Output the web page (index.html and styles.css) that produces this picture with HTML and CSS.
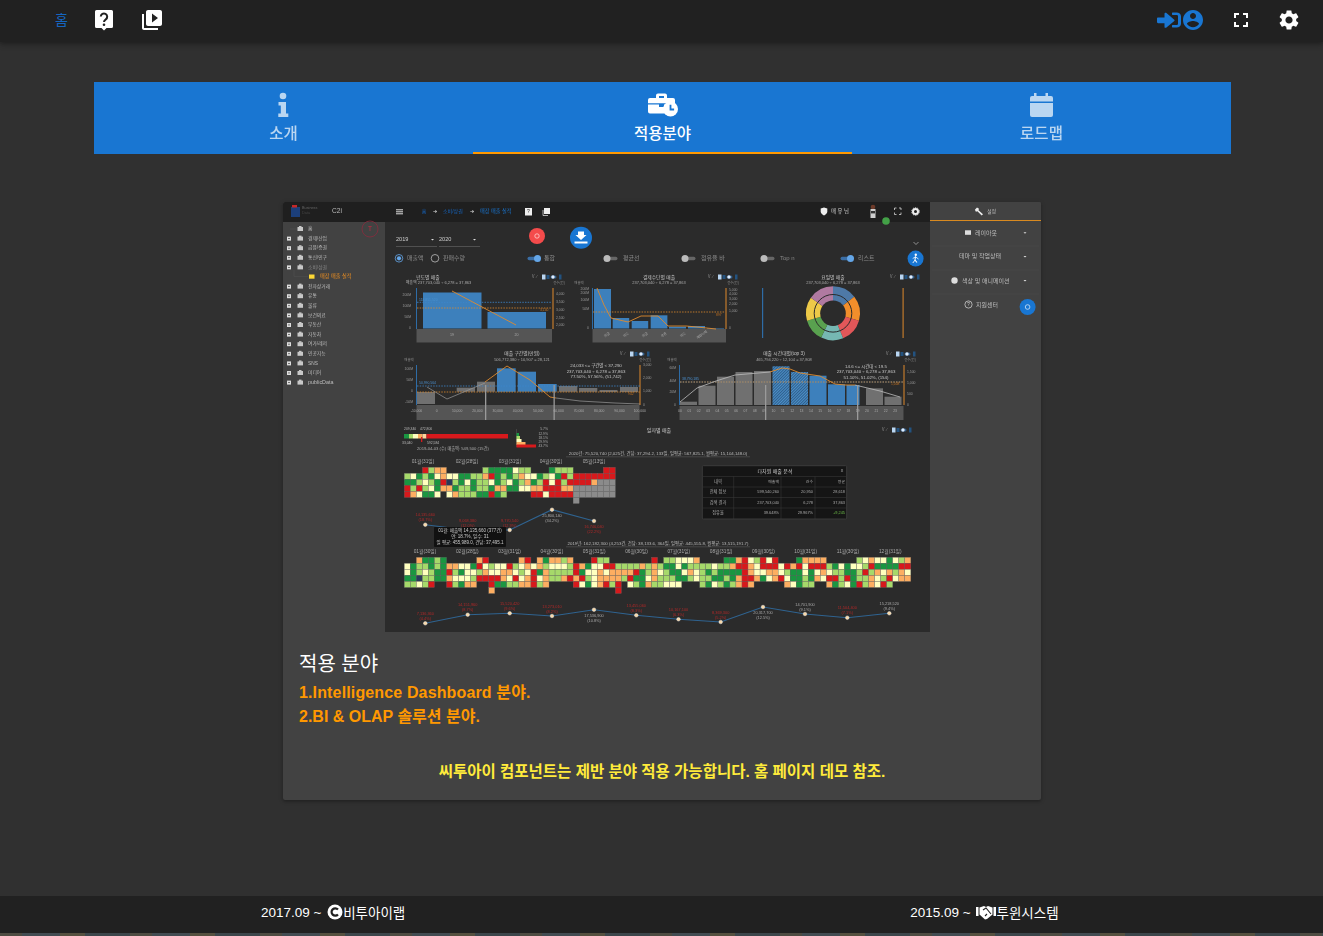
FILE: index.html
```html
<!DOCTYPE html>
<html lang="ko">
<head>
<meta charset="utf-8">
<title>적용분야</title>
<link rel="stylesheet" href="styles.css">
</head>
<body>
<header class="topbar">
  <nav class="topbar-left">
    <a class="top-home">홈</a>
    <span class="top-btn">
      <svg class="ico-help" viewBox="0 0 20 22"><path class="white" d="M2.5 1h15A1.5 1.500 0 0 1 19 2.500v15a1.500 1.500 0 0 1-1.500 1.500H12.500L10 21.500 7.500 19h-5A1.500 1.500 0 0 1 1 17.500v-15A1.500 1.500 0 0 1 2.500 1z"/><path class="qmark" d="M6.800 7.600a3.200 3.200 0 1 1 5 2.700c-1.200.8-1.800 1.300-1.800 2.700"/><circle class="qdot" cx="10" cy="15.700" r="1.300"/></svg>
    </span>
    <span class="top-btn">
      <svg class="ico-24" viewBox="0 0 24 24"><path class="white" d="M4 6H2v14c0 1.100.9 2 2 2h14v-2H4V6zm16-4H8c-1.100 0-2 .9-2 2v12c0 1.100.9 2 2 2h12c1.100 0 2-.9 2-2V4c0-1.100-.9-2-2-2zm-8 12.500v-9l6 4.500-6 4.500z"/></svg>
    </span>
  </nav>
  <div class="topbar-right">
    <span class="login-group">
      <svg class="ico-login" viewBox="0 0 512 512" preserveAspectRatio="none"><path class="blue" d="M416 448h-84c-6.600 0-12-5.400-12-12v-40c0-6.600 5.400-12 12-12h84c17.700 0 32-14.300 32-32V160c0-17.700-14.300-32-32-32h-84c-6.600 0-12-5.400-12-12V76c0-6.600 5.400-12 12-12h84c53 0 96 43 96 96v192c0 53-43 96-96 96zm-47-201L201 79c-15-15-41-4.500-41 17v96H24c-13.300 0-24 10.700-24 24v96c0 13.300 10.700 24 24 24h136v96c0 21.500 26 32 41 17l168-168c9.300-9.400 9.300-24.600 0-34z"/></svg>
      <svg class="ico-24" viewBox="0 0 24 24"><path class="blue" d="M12 2C6.480 2 2 6.480 2 12s4.480 10 10 10 10-4.480 10-10S17.520 2 12 2zm0 3c1.660 0 3 1.340 3 3s-1.340 3-3 3-3-1.340-3-3 1.340-3 3-3zm0 14.200c-2.500 0-4.710-1.280-6-3.220.03-1.990 4-3.080 6-3.080 1.990 0 5.970 1.090 6 3.080-1.290 1.940-3.500 3.220-6 3.220z"/></svg>
    </span>
    <svg class="ico-24 full" viewBox="0 0 24 24"><path class="white" d="M7 14H5v5h5v-2H7v-3zm-2-4h2V7h3V5H5v5zm12 7h-3v2h5v-5h-2v3zM14 5v2h3v3h2V5h-5z"/></svg>
    <svg class="ico-24 gear" viewBox="0 0 24 24"><path class="white" d="M19.140 12.940c.04-.3.06-.61.06-.94 0-.32-.02-.64-.07-.94l2.030-1.580c.18-.14.23-.41.12-.61l-1.920-3.320c-.12-.22-.37-.29-.59-.22l-2.390.96c-.5-.38-1.030-.7-1.620-.94l-.36-2.540c-.04-.24-.24-.41-.48-.41h-3.840c-.24 0-.43.17-.47.41l-.36 2.540c-.59.24-1.130.57-1.620.94l-2.390-.96c-.22-.08-.47 0-.59.22L2.740 8.870c-.12.21-.08.47.12.61l2.030 1.580c-.05.3-.09.63-.09.94s.02.64.07.94l-2.030 1.580c-.18.14-.23.41-.12.61l1.920 3.320c.12.22.37.29.59.22l2.390-.96c.5.38 1.030.7 1.620.94l.36 2.540c.05.24.24.41.48.41h3.840c.24 0 .44-.17.47-.41l.36-2.540c.59-.24 1.130-.56 1.620-.94l2.390.96c.22.08.47 0 .59-.22l1.920-3.320c.12-.22.07-.47-.12-.61l-2.010-1.580zM12 15.600c-1.980 0-3.600-1.620-3.600-3.600s1.620-3.600 3.600-3.600 3.600 1.620 3.600 3.600-1.620 3.600-3.600 3.600z"/></svg>
  </div>
</header>

<main class="content">
  <div class="tabs">
    <div class="tab">
      <svg class="tab-ico" viewBox="0 0 30 26"><circle class="white" cx="14" cy="4" r="3.300"/><path class="white" d="M9.500 10h7.500v11.500h2.300V25H9.300v-3.500h2.500v-8H9.500z"/></svg>
      <span class="tab-label">소개</span>
    </div>
    <div class="tab active">
      <svg class="tab-ico" viewBox="0 0 30 26"><path class="white" d="M10 1.500h7a2 2 0 0 1 2 2v2.500h6a2 2 0 0 1 2 2v3.200H0V8a2 2 0 0 1 2-2h6V3.500a2 2 0 0 1 2-2zM11 6h5V4h-5z"/><path class="white" d="M0 12.500h11V15h5v-2.500h2v9H2a2 2 0 0 1-2-2z"/><circle class="white" cx="22.500" cy="17" r="7.500"/><path class="clockhand" d="M22.500 12.800v4.700h3.600"/></svg>
      <span class="tab-label">적용분야</span>
    </div>
    <div class="tab">
      <svg class="tab-ico" viewBox="0 0 30 26"><path class="white" d="M7 1h2.500v3h9V1H21v3h3a2 2 0 0 1 2 2v3.500H3V6a2 2 0 0 1 2-2h2z"/><path class="white" d="M3 11h23v12a2 2 0 0 1-2 2H5a2 2 0 0 1-2-2z"/></svg>
      <span class="tab-label">로드맵</span>
    </div>
  </div>

  <article class="card">
    <svg class="mock" id="mock" viewBox="283 202 758 430" width="758" height="430"></svg>
    <div class="card-body">
      <h2 class="card-title">적용 분야</h2>
      <p class="item wide">1.Intelligence Dashboard 분야.</p>
      <p class="item">2.BI &amp; OLAP 솔루션 분야.</p>
      <p class="note">씨투아이 컴포넌트는 제반 분야 적용 가능합니다. 홈 페이지 데모 참조.</p>
    </div>
  </article>
</main>

<footer class="footer">
  <span class="foot-item">2017.09 ~ <svg class="foot-c" viewBox="0 0 16 16"><circle class="white" cx="8" cy="8" r="7.500"/><path class="cmark" d="M11 5.500a3.700 3.700 0 1 0 0 5"/></svg>비투아이랩</span>
  <span class="foot-item">2015.09 ~ <svg class="foot-h" viewBox="0 0 20 16"><path class="white" d="M0 3h2.500v9H0zM17.500 3H20v9h-2.500zM3.500 3.500 8 2l2 1 2-1 4.500 1.500v7L11 15l-2 .5-5.500-5z"/><path class="cmark thin" d="M7 6l3-2 5 6M9 12l2-2"/></svg>투윈시스템</span>
</footer>
<div class="ground"></div>
<script src="app.js"></script>
</body>
</html>
```
FILE: styles.css
```css
* { box-sizing: border-box; }
html, body { margin: 0; height: 100%; }
body {
  display: flex;
  flex-direction: column;
  height: 936px;
  overflow: hidden;
  background: #303030;
  color: #fff;
  font-family: "Liberation Sans", "Noto Sans CJK KR", sans-serif;
  font-size: 14px;
}
.white { fill: #fff; }
.blue { fill: #1976d2; }
.qmark { fill: none; stroke: #212121; stroke-width: 2; }
.qdot { fill: #212121; }
.clockhand { fill: none; stroke: #1976d2; stroke-width: 1.800; }
.cmark { fill: none; stroke: #212121; stroke-width: 2.200; }
.cmark.thin { stroke-width: 1.100; }

.topbar {
  flex: none;
  height: 42px;
  display: flex;
  align-items: center;
  justify-content: space-between;
  background: #212121;
  box-shadow: 0 2px 4px rgba(0, 0, 0, .25), 0 1px 8px rgba(0, 0, 0, .18);
  padding: 0 22px 2px 55px;
}
.topbar-left { display: flex; align-items: center; }
.top-home { color: #1565c0; font-size: 14px; line-height: 20px; width: 24px; }
.top-btn { display: flex; margin-left: 15px; }
.top-btn + .top-btn { margin-left: 26px; }
.ico-help { width: 20px; height: 22px; display: block; }
.ico-24 { width: 24px; height: 24px; display: block; }
.topbar-right { display: flex; align-items: center; }
.login-group { display: flex; align-items: center; }
.ico-login { width: 24px; height: 20px; display: block; }
.full { margin-left: 24px; }
.gear { margin-left: 24px; }

.content { flex: 1; padding: 40px 92px 0 94px; }
.tabs { display: flex; height: 72px; background: #1976d2; }
.tab {
  flex: 1;
  display: flex;
  flex-direction: column;
  align-items: center;
  padding-top: 10px;
  opacity: .7;
}
.tab.active { opacity: 1; border-bottom: 2px solid #ff9800; }
.tab-ico { width: 30px; height: 26px; display: block; }
.tab-label { font-size: 15.500px; font-weight: 500; line-height: 20px; margin-top: 4px; font-family: "Noto Sans CJK KR", sans-serif; }

.card {
  width: 758px;
  height: 598px;
  margin: 48px 0 0 189px;
  background: #424242;
  border-radius: 2px;
  box-shadow: 0 1px 5px rgba(0, 0, 0, .2), 0 2px 2px rgba(0, 0, 0, .14);
  overflow: hidden;
}
.mock { display: block; background: #424242; }
.mock-inner { filter: blur(.65px); }
.card-body { padding: 16px; }
.card-title { margin: 0; font-size: 20px; line-height: 32px; font-weight: 400; }
.item { margin: 0; font-size: 16px; line-height: 24px; font-weight: 700; color: #ff9800; position: relative; top: 1px; }
.item.wide { letter-spacing: .14px; }
.note { margin: 32px 0 0; font-size: 15.500px; line-height: 24px; font-weight: 700; color: #ffeb3b; text-align: center; }

.footer {
  flex: none;
  height: 37px;
  display: flex;
  align-items: center;
  gap: 505px;
  padding: 0 0 5px 261px;
  background: #212121;
  font-size: 13.500px;
}
.foot-item { display: flex; align-items: center; white-space: pre; }
.foot-c { width: 16px; height: 16px; margin-left: 2px; }
.foot-h { width: 20px; height: 16px; margin-left: 2px; }
.ground {
  flex: none;
  height: 3px;
  background: repeating-linear-gradient(90deg, #4e4c42 0 22px, #424c52 22px 60px, #55503f 60px 85px, #3c464b 85px 130px);
}
```
FILE: app.js
```js
var NS = "http://www.w3.org/2000/svg";
var root = document.createElementNS(NS, "g");
root.setAttribute("class", "mock-inner");
document.getElementById("mock").appendChild(root);

function el(tag, attrs, text) {
  var e = document.createElementNS(NS, tag);
  for (var k in attrs) e.setAttribute(k, attrs[k]);
  if (text !== undefined) e.textContent = text;
  root.appendChild(e);
  return e;
}
function R(x, y, w, h, fill, extra) {
  var a = { x: x, y: y, width: w, height: h, fill: fill };
  for (var k in extra || {}) a[k] = extra[k];
  return el("rect", a);
}
function C(x, y, r, fill, extra) {
  var a = { cx: x, cy: y, r: r, fill: fill };
  for (var k in extra || {}) a[k] = extra[k];
  return el("circle", a);
}
function L(pts, color, w, dash) {
  var a = { points: pts, fill: "none", stroke: color, "stroke-width": w || 0.8 };
  if (dash) a["stroke-dasharray"] = dash;
  return el("polyline", a);
}
function T(x, y, s, size, color, anchor) {
  return el("text", {
    x: x, y: y, "font-size": size || 4.4, fill: color || "#bdbdbd",
    "text-anchor": anchor || "start", "dominant-baseline": "middle",
    "font-family": "'Liberation Sans','Noto Sans CJK KR',sans-serif"
  }, s);
}

/* ---- backgrounds ---- */
R(283, 202, 758, 430, "#424242");
R(385, 222, 545, 411, "#2b2b2b");
R(283, 202, 647, 20, "#1f1f1f");

/* ---- mock top bar ---- */
R(291, 207, 9, 10, "#1c3f7a");
R(292, 205, 5, 2.500, "#c62828");
T(302, 207.500, "Business", 3.800, "#666");
T(302, 213, "Data", 3.800, "#444");
T(332, 211.500, "C2i", 6.600, "#bbb");
[209.300, 211.300, 213.300].forEach(function (y) { R(396, y, 7, 1, "#ddd"); });
T(424, 211.500, "홈", 5, "#1565c0", "middle");
T(435, 211.500, "➔", 4.500, "#ddd", "middle");
T(443, 211.500, "소비/상권", 5, "#1565c0");
T(472, 211.500, "➔", 4.500, "#ddd", "middle");
T(480, 211.500, "매장 매출 실적", 5.200, "#1976d2");
R(525, 208, 7, 7.500, "#eee");
T(528.500, 212, "?", 5, "#222", "middle");
R(544, 208, 6, 6, "#eee");
L("543,210 543,215.500 548,215.500", "#eee", 0.7);
el("path", { d: "M824 207.500l3.300 1v3c0 1.800-1.500 3.200-3.300 4-1.800-.8-3.300-2.200-3.300-4v-3z", fill: "#eee" });
T(831, 211.500, "매 유 님", 5.400, "#ccc");
C(873, 207, 2.300, "#6d3b2a");
R(870.500, 209, 5, 9, "#cfcfcf");
R(871, 211, 4, 2.400, "#333");
C(886, 221, 3.800, "#43a047");
L("894.500,210 894.500,208 896.500,208", "#eee", 0.7);
L("899,208 901,208 901,210", "#eee", 0.7);
L("894.500,212.500 894.500,214.500 896.500,214.500", "#eee", 0.7);
L("899,214.500 901,214.500 901,212.500", "#eee", 0.7);
C(915.500, 211.500, 2.500, "none", { stroke: "#eee", "stroke-width": 2 });
C(915.500, 211.500, 3.800, "none", { stroke: "#eee", "stroke-width": 0.9, "stroke-dasharray": "1.400 1" });

/* ---- sidebar ---- */
[["홈", 0], ["경제/산업", 1], ["금융/증권", 1], ["통신/인구", 1], ["소비/상권", 2], ["매장 매출 실적", 3],
 ["전자상거래", 1], ["유통", 1], ["물류", 1], ["보건의료", 1], ["부동산", 1], ["자동차", 1], ["여가/레저", 1],
 ["인공지능", 1], ["SNS", 1], ["미디어", 1], ["publicData", 1]].forEach(function (m, i) {
  var y = 229 + i * 9.600;
  if (m[1] === 3) {
    L("294,270 294,276.500 308,276.500", "#555", 0.4);
    R(309, 274.500, 5.500, 4.200, "#fdd835");
    T(320, y, m[0], 5.200, "#f09020");
    return;
  }
  if (m[1] > 0) {
    R(287, y - 2, 4, 4, "#ddd");
    R(288, y - .4, 2, .7, "#444");
  } else {
    L("290,229 298,229", "#555", 0.4);
  }
  R(297.500, y - 2, 5.500, 4, "#c8c8c8");
  R(299, y - 3, 2.500, 1.500, "#c8c8c8");
  T(308, y, m[0], m[0] === "publicData" ? 5.400 : 4.800, m[1] === 2 ? "#888" : "#bdbdbd");
});
C(370, 229, 8, "none", { stroke: "#8a2b3e", "stroke-width": 0.8 });
T(370, 229.300, "T", 6.500, "#c62840", "middle");

/* ---- controls ---- */
T(396, 239.500, "2019", 5.600, "#ccc");
T(439, 239.500, "2020", 5.600, "#ccc");
L("396,246.500 437,246.500", "#777", 0.5);
L("439,246.500 480,246.500", "#777", 0.5);
el("path", { d: "M431 239l3 0-1.500 1.500z", fill: "#ddd" });
el("path", { d: "M473 239l3 0-1.500 1.500z", fill: "#ddd" });
C(537, 236, 8, "#f44b4b");
C(537, 236, 2.200, "none", { stroke: "#ffd0d0", "stroke-width": 0.8 });
C(581, 237.700, 11, "#1976d2");
el("path", { d: "M578 231.500h6v3.500h2.500l-5.500 5-5.500-5H578zM574.500 241.500h13v2h-13z", fill: "#fff" });
L("913.500,242 916,244.500 918.500,242", "#aaa", 0.8);
C(399, 258.300, 3.800, "none", { stroke: "#64a6e8", "stroke-width": 0.8 });
C(399, 258.300, 2.100, "#64a6e8");
T(407, 258.500, "매출액", 6, "#888");
C(435, 258.300, 3.800, "none", { stroke: "#bbb", "stroke-width": 0.8 });
T(443, 258.500, "판매수량", 6, "#888");
[[527, 1, "통합", 544], [604, 0, "평균선", 623], [682, 0, "점유율 바", 701], [761, 0, "Top n", 780], [840, 1, "리스트", 858]].forEach(function (t) {
  R(t[0] + 0.500, 256.800, 13, 3.500, t[1] ? "#3b6ea5" : "#666", { rx: 1.700 });
  C(t[1] ? t[0] + 10.500 : t[0] + 3, 258.500, 3.500, t[1] ? "#64a6e8" : "#bbb");
  T(t[3], 258.500, t[2], 6, "#888");
});
C(915.600, 258.600, 8, "#1976d2");
C(915.800, 254.800, 1.200, "#fff");
L("915.500,256.500 915,260 917,262.500", "#fff", 1.100);
L("912.700,258.500 915.500,256.800 918.500,259", "#fff", 0.800);
L("915,260 912.800,263", "#fff", 0.900);

/* ---- right panel ---- */
el("path", { d: "M977 207.500l2 1.200-.5 1.500 4.500 4-1.300 1.300-4.300-4.300-1.500.5-1-2z", fill: "#eee" });
T(987, 211.500, "설정", 5, "#bbb");
R(930, 220, 111, 1, "#d98a20");
[246, 270, 294].forEach(function (y) { L("932," + y + " 1039," + y, "#4d4d4d", 0.5); });
R(965, 230.300, 6, 4.500, "#ddd");
T(975, 233, "레이아웃", 6, "#bbb");
T(959, 256.500, "테마 및 작업상태", 6, "#bbb");
C(954.500, 280.500, 3.200, "#ddd");
T(962, 281, "색상 및 애니메이션", 6, "#bbb");
C(968.500, 304.500, 3.600, "none", { stroke: "#ddd", "stroke-width": 0.7 });
T(968.500, 305, "?", 4.500, "#ddd", "middle");
T(976, 305, "지원센터", 6, "#bbb");
[232.300, 256, 280].forEach(function (y) { el("path", { d: "M1023.500 " + y + "h3l-1.500 1.500z", fill: "#ddd" }); });
C(1027.600, 307, 8, "#1976d2");
C(1027.600, 307, 2.300, "none", { stroke: "#cfe3f7", "stroke-width": 0.8 });

/* ---- shared chart bits ---- */
var BLUE = "#3d80bc", GREY = "#707070", ORANGE = "#e08a2c", BAND = "#555";
function icons(x, y) {
  T(x, y, "Ⅴ ⁄", 4.400, "#8a8a8a");
  R(x + 11, y - 2.500, 3.500, 5, "#b9d6f2");
  R(x + 15.500, y - 2, 3, 4, "#23527f");
  R(x + 19.500, y - 1.500, 6, 3, "#345f8c", { rx: 1.500 });
  C(x + 22, y, 1.700, "#dfeeff");
  R(x + 28, y - 2.500, 2.500, 5, "#23527f");
}
function title(x, y, s, sub, subx) {
  T(x, y, s, 4.800, "#c4c4c4", "middle");
  T(subx || x, y + 5.500, sub, 4, "#aaa", "middle");
}

/* chart 1 */
title(428, 277.500, "년도별 매출", "매출액 237,703,040 ÷ 6,278 = 37,863", 438.500);
icons(531, 277);
T(559, 283.500, "건수(건)", 3.400, "#888", "middle");
R(416, 288, 1, 41, "#2e6ca6");
R(552.500, 288, 1, 41, "#e08a2c");
R(423, 292.500, 58.500, 36, BLUE);
R(487.500, 312, 58.500, 16.500, BLUE);
R(416.500, 329, 135.500, 13.500, BAND);
T(452, 335.500, "19", 3.600, "#aaa", "middle");
T(516.500, 335.500, "20", 3.600, "#aaa", "middle");
L("417,302.300 552,302.300", "#3d87cc", 0.8, "1.500 1.200");
L("417,308 552,308", "#e08a2c", 0.8, "1.500 1.200");
L("452,291 516,325", ORANGE, 0.9);
T(419, 300.500, "118,851,520", 3.400, "#4a90d0");
T(540, 310, "3,140", 3.400, "#c07020");
[["200M", 295], ["100M", 306.500], ["50M", 317.500], ["0", 328.500]].forEach(function (p) { T(411, p[1], p[0], 3.400, "#999", "end"); });
[["4,000", 294.500], ["3,500", 302], ["3,000", 310], ["2,500", 318], ["2,000", 325.500]].forEach(function (p) { T(556, p[1], p[0], 3.400, "#999"); });

/* chart 2 */
title(659, 277.500, "결제수단별 매출", "237,703,040 ÷ 6,278 = 37,863");
icons(707, 277);
T(579, 283, "매출액", 3.400, "#888", "middle");
T(733, 283, "건수(건)", 3.400, "#888", "middle");
R(592, 288, 1, 41, "#2e6ca6");
R(725.500, 288, 1, 41, "#e08a2c");
[[594, 289, 17], [612.700, 318, 16.500], [631.700, 321, 16.500], [650.700, 315.300, 16.700], [669, 326.700, 17], [688, 326, 17], [707, 328, 17]].forEach(function (b) {
  R(b[0], b[1], b[2], 328.500 - b[1], BLUE);
});
R(592.500, 329, 133.500, 13.500, BAND);
["현금", "카드", "현금", "쿠폰", "카드", "계좌이체"].forEach(function (s, i) {
  var x = 607 + i * 19;
  var t = T(x, 335, s, 3.400, "#aaa", "middle");
  t.setAttribute("transform", "rotate(-35 " + x + " 335)");
});
L("593,312 725,312", "#e08a2c", 0.8, "1.500 1.200");
L("597,288 604,305 611,318 628,322 641,316 658,316 668,326 686,326 697,327 716,329", ORANGE, 0.9);
T(716, 315, "897", 3.400, "#c07020");
[["200M", 289], ["200M", 293], ["100M", 300], ["50M", 309], ["0", 328.500]].forEach(function (p) { T(589, p[1], p[0], 3.400, "#999", "end"); });
[["5,000", 290], ["4,000", 294.500], ["3,000", 299], ["2,000", 304], ["1,000", 311.500], ["0", 328.500]].forEach(function (p) { T(729, p[1], p[0], 3.400, "#999"); });

/* donut */
title(833, 277.500, "요일별 매출", "237,703,040 ÷ 6,278 = 37,863");
icons(889, 277);
R(762, 288, 1.200, 50, "#2e6ca6");
R(902.500, 288, 1.200, 50, "#c07a2c");
function arc(cx, cy, r0, r1, a0, a1, fill) {
  var p = function (r, a) { var t = (a - 90) * Math.PI / 180; return (cx + r * Math.cos(t)).toFixed(2) + " " + (cy + r * Math.sin(t)).toFixed(2); };
  var big = a1 - a0 > 180 ? 1 : 0;
  el("path", { d: "M" + p(r1, a0) + "A" + r1 + " " + r1 + " 0 " + big + " 1 " + p(r1, a1) + "L" + p(r0, a1) + "A" + r0 + " " + r0 + " 0 " + big + " 0 " + p(r0, a0) + "Z", fill: fill });
}
[[0, 52, "#4e79a7"], [52, 106, "#f28e2b"], [106, 158, "#e15759"], [158, 206, "#76b7b2"], [206, 254, "#59a14f"], [254, 305, "#edc948"], [305, 360, "#b07aa1"]].forEach(function (s) {
  arc(833, 313.300, 12, 27, s[0], s[1], s[2]);
});
C(833, 313.300, 18.800, "none", { stroke: "#2b2b2b", "stroke-width": 1 });
C(833, 313.300, 12.800, "#2b2b2b");

/* chart 3 */
title(522, 354, "매출 구간별(만원)", "506,772,380 ÷ 10,907 = 28,121");
icons(619, 354);
T(409, 360, "매출액", 3.400, "#888", "middle");
T(645, 360, "건수(건)", 3.400, "#888", "middle");
R(416, 365, 1, 40, "#2e6ca6");
R(639.500, 365, 1, 40, "#e08a2c");
[[417, 392, 18, 12, GREY], [456.700, 387.700, 18.300, 4, GREY], [477, 381.700, 18, 10, GREY], [497, 368.300, 18.700, 23.500, BLUE], [517.700, 371.700, 18.300, 20, BLUE], [538, 384, 18.700, 7.700, BLUE], [559, 386, 18.300, 5.800, GREY], [579, 388, 18.300, 3.800, GREY], [599.500, 390, 18, 2, GREY], [620, 387, 18, 5, GREY]].forEach(function (b) {
  R(b[0], b[1], b[2], b[3], b[4]);
});
R(416.500, 405, 223, 15, BAND);
L("417,386 640,386", "#3d87cc", 0.8, "1.500 1.200");
L("417,392 640,392", "#e08a2c", 0.8, "1.500 1.200");
L("427,387 447,399 485,383", "#999", 0.7);
L("485,382 507,366 530,380 550,397 556,398", ORANGE, 0.9);
L("556,398 580,401 615,403 640,404", "#999", 0.7);
R(485, 385, 1.300, 35, "#9a9a9a");
R(553.500, 385, 1.300, 35, "#9a9a9a");
T(419, 383.500, "50,990,564", 3.400, "#4a90d0");
T(628, 394, "942", 3.400, "#c07020");
["-10,000", "0", "10,000", "20,000", "30,000", "40,000", "50,000", "60,000", "70,000", "80,000", "90,000", "100,000"].forEach(function (s, i) {
  T(416.500 + i * 20.300, 411, s, 3.400, "#aaa", "middle");
});
[["100M", 369.500], ["50M", 380.500], ["0", 391.500], ["-50M", 402.500]].forEach(function (p) { T(413, p[1], p[0], 3.400, "#999", "end"); });
[["3,000", 365], ["2,000", 378.500], ["1,000", 391.500], ["0", 405]].forEach(function (p) { T(643, p[1], p[0], 3.400, "#999"); });
T(596, 366, "24,033 <= 구간별 < 37,290", 4.400, "#c8c8c8", "middle");
T(596, 371.500, "237,703,040 ÷ 6,278 = 37,863", 4.400, "#c8c8c8", "middle");
T(596, 377, "77.50%, 57.56%, (51,742)", 4.400, "#c8c8c8", "middle");

/* chart 4 */
var c4 = el("defs", {});
c4.innerHTML = '<pattern id="hatch" width="2" height="2" patternUnits="userSpaceOnUse" patternTransform="rotate(45)"><rect width="2" height="2" fill="#2f5f8c"/><rect width="1" height="2" fill="#4c8fc8"/></pattern>';
title(784, 354, "매출 시간대별(top 3)", "465,794,220 ÷ 12,104 = 37,808");
icons(885, 354);
T(672, 360, "매출액", 3.400, "#888", "middle");
T(910, 360, "건수(건)", 3.400, "#888", "middle");
R(679, 365, 1, 40, "#2e6ca6");
R(903.500, 365, 1, 40, "#e08a2c");
[401.700, 385.700, 376.700, 372, 371, 366.300, 372, 375.700, 384.300, 385, 388.300, 396.700].forEach(function (top, i) {
  var fill = i < 5 || i > 9 ? GREY : i < 7 ? "url(#hatch)" : BLUE;
  var w = i === 9 ? 13 : 17;
  R(680 + i * 18.500 + (i > 9 ? 1 : 0), top, w, 405 - top, fill);
});
R(679.500, 406, 224, 14, BAND);
L("680,382 904,382", "#3d87cc", 0.8, "1.500 1.200");
L("680,382 904,382", "#e08a2c", 0.8, "1.500 1.200");
L("680,402 697,388 716,381 735,375 770,372", "#bdbdbd", 0.8);
L("770,372 782,368 790,369 800,373 820,376 835,384 845,385 855,385", ORANGE, 0.9);
L("855,385 880,391 900,397", "#bdbdbd", 0.8);
R(765, 385, 1.300, 35, "#9a9a9a");
R(857, 385, 1.300, 35, "#9a9a9a");
T(682, 379, "38,790,185", 3.400, "#4a90d0");
T(891, 384, "1,008", 3.400, "#c07020");
for (var h = 0; h < 24; h++) T(680 + h * 9.350, 411, h < 10 ? "0" + h : String(h), 3.400, "#aaa", "middle");
[["60M", 368.500], ["40M", 380.700], ["20M", 392.500], ["0", 405]].forEach(function (p) { T(676, p[1], p[0], 3.400, "#999", "end"); });
[["1,500", 372], ["1,000", 383], ["500", 394], ["0", 405]].forEach(function (p) { T(907, p[1], p[0], 3.400, "#999"); });
T(866, 366.800, "14.6 <= 시간대 < 19.5", 4.400, "#c8c8c8", "middle");
T(866, 372.300, "237,703,040 ÷ 6,278 = 37,863", 4.400, "#c8c8c8", "middle");
T(866, 377.800, "51.10%, 51.02%, (154)", 4.400, "#c8c8c8", "middle");

/* ---- legend ---- */
T(404, 429, "209,340", 3.400, "#bbb");
T(420, 429, "472,800", 3.400, "#bbb");
[["#1a9641", 5], ["#a6d96a", 4], ["#ffffbf", 5], ["#fdae61", 4.500], ["#fdd49e", 4]].forEach(function (s, i, a) {
  var x = 404; for (var j = 0; j < i; j++) x += a[j][1];
  R(x, 434, s[1], 4.500, s[0]);
});
R(426.500, 434, 81.500, 4.500, "#d7191c");
R(421, 437, 1.300, 5, "#d7191c");
T(402, 443.500, "33,040", 3.400, "#bbb");
T(427, 443.500, "592,584", 3.400, "#bbb");
T(417, 448.500, "2019-04-03 (수) 매출액: 549,500 (15건)", 4.200, "#aaa");
L("516.500,429 516.500,447", "#666", 0.4);
[[433, 2.500, "#1a9641", "5.7%"], [436, 3.500, "#a6d96a", "12.9%"], [439, 5, "#ffffbf", "18.1%"], [442, 9, "#fdae61", "29.9%"], [444.500, 19.500, "#d7191c", "43.7%"]].forEach(function (r, i) {
  R(516.500, r[0], r[1], 3, r[2]);
  T(548, 429.500 + i * 4.200, r[3], 3.400, "#aaa", "end");
});
T(659, 431, "일자별 매출", 5, "#c8c8c8", "middle");
icons(881, 430);

/* ---- heat maps ---- */
var HC = { G: "#1a9641", g: "#a6d96a", y: "#ffffbf", o: "#fdae61", r: "#d7191c", x: "#8b8b8b", n: "#29395a" };
function heat(rows, x0, y0) {
  rows.forEach(function (row, ry) {
    row.split("").forEach(function (c, cx) {
      if (HC[c]) R(x0 + cx * 6.030, y0 + ry * 6.030, 6.030, 6.030, HC[c], { stroke: "#6e6e6e", "stroke-width": 0.3 });
    });
  });
}
heat([
  "...rgoo......gGGGGygg...Gggg.....rr",
  "gyGgGyoyyGGggorGgGgoyyGgyGrgrrrrrrr",
  "GGgygGrngGyGggyGgyGgoGgryrgrrrroxxx",
  "rgrgyGooGggGggGooGGyyoorrrooxxxxxxx",
  "royGGy.yogggGGrGg....rryrrrrxxxxxxx",
  "............................x......"
], 404.300, 467.300);
heat([
  "..oGGgG.....or.....or.oGoogo...rgg.......r.ggyyyo....GGorygryr...Goooo.....gyoyyGygo",
  "yGggGgGooyyGrygyyrgyoyogyyygroGyyrrggggogogGGyGggggyggorroyrrryroryrrrgGyGyygrGGGGrr",
  "yGgygGGrgGyygoyyooygyrGoggggrGyyoyoooorGgoygGGyoygGgGGGGroyyooygGGyGyoyggGGgrgoyogoy",
  "GGnggGGoyyygrrrroyryoryoggororgyoooogrGGyogggGGgyggGGgGorroGyoryGGgGoyrrgrGggoygryoo",
  "ggygr..rgGoo..rGGggoorgo....ryGyorgr.ygGoggyyy...gGygGgoro.....oyGgg..oGgyGrgoyrg...",
  "..............o....................r"
], 404.300, 557.300);

/* month labels */
[["01월(31일)", 423], ["02월(28일)", 467], ["03월(31일)", 510], ["04월(30일)", 551], ["05월(13일)", 594]].forEach(function (m) { T(m[1], 462, m[0], 4.800, "#aaa", "middle"); });
["01월(30일)", "02월(28일)", "03월(31일)", "04월(30일)", "05월(31일)", "06월(30일)", "07월(31일)", "08월(31일)", "09월(30일)", "10월(31일)", "11월(30일)", "12월(31일)"].forEach(function (s, i) {
  T(425 + i * 42.300, 551.800, s, 4.800, "#aaa", "middle");
});

T(658, 454, "2020년: 75,520,740 (2,025건, 건당: 37,294.2, 133일, 일평균: 567,825.1, 월평균: 15,104,148.0)", 4.350, "#bbb", "middle");
L("566,456.800 750,456.800", "#888", 0.3);
T(658, 544, "2019년: 162,182,300 (4,253건, 건당: 38,133.6, 364일, 일평균: 445,555.8, 월평균: 13,515,191.7)", 4.350, "#bbb", "middle");
L("566,546.800 750,546.800", "#888", 0.3);

/* ---- line charts ---- */
function line(points) {
  L(points.map(function (p) { return p[0] + "," + p[1]; }).join(" "), "#2f6390", 1.100);
  points.forEach(function (p) {
    C(p[0], p[1], 1.800, "#f8d8a8", { stroke: "#fff", "stroke-width": 0.4 });
    var kind = p[4];
    var col = kind === "r" || kind === "br" ? "#b02828" : "#aaa";
    var y = kind === "b" || kind === "br" ? p[1] + 6 : p[1] - 9.500;
    T(p[0], y, p[2], 3.900, col, "middle");
    T(p[0], y + 5, p[3], 3.900, col, "middle");
  });
}
line([
  [425.300, 524.700, "14,135,660", "(18.7%)", "r"],
  [467.700, 530, "9,068,380", "(12.0%)", "r"],
  [509.700, 530, "9,770,540", "(12.9%)", "r"],
  [552, 509.700, "25,800,140", "(34.2%)", "b"],
  [594, 521, "16,746,040", "(22.2%)", "br"]
]);
line([
  [425.300, 623.300, "7,136,360", "(4.4%)", "r"],
  [467.700, 614.700, "14,151,960", "(8.7%)", "r"],
  [509.700, 613.300, "15,520,420", "(9.6%)", "r"],
  [552, 616, "13,273,010", "(8.2%)", "r"],
  [594, 609.700, "17,536,900", "(10.8%)", "b"],
  [636.300, 615.300, "13,455,060", "(8.3%)", "r"],
  [678.500, 619.300, "10,167,100", "(6.3%)", "r"],
  [720.700, 622, "8,369,300", "(5.2%)", "r"],
  [763, 607, "20,317,700", "(12.5%)", "b"],
  [805, 614, "14,701,900", "(9.1%)", "g"],
  [847.300, 617.700, "11,504,400", "(7.1%)", "r"],
  [889.300, 613.300, "15,218,520", "(9.4%)", "g"]
]);

/* tooltip */
R(434, 527, 72, 20, "#111", { rx: 1 });
T(470, 531, "01월: 매출액 14,135,660 (377건)", 4.500, "#ccc", "middle");
T(470, 537, "연: 18.7%, 일수: 31", 4.500, "#ccc", "middle");
T(470, 543, "일 평균: 455,989.0, 건당: 37,495.1", 4.500, "#ccc", "middle");

/* table */
R(702.300, 465.700, 144.400, 53.300, "#151515", { stroke: "#3a3a3a", "stroke-width": 1, rx: 1 });
T(775, 471.500, "다차원 매출 분석", 5, "#ccc", "middle");
T(842, 471, "X", 3.800, "#bbb", "middle");
[476.500, 487, 497.500, 508].forEach(function (y) { L("703," + y + " 846," + y, "#3c3c3c", 0.5); });
[733.700, 781, 815].forEach(function (x) { L(x + ",476.500 " + x + ",519", "#3c3c3c", 0.5); });
[["내역", "매출액", "건수", "평균"], ["전체 정보", "599,540,260", "20,950", "28,618"], ["검색 결과", "237,703,040", "6,278", "37,863"], ["점유율", "39.648%", "29.967%", "+9,245"]].forEach(function (r, i) {
  var y = 482 + i * 10.350;
  T(718, y, r[0], 4.200, "#aaa", "middle");
  T(779, y, r[1], 3.900, "#aaa", "end");
  T(813, y, r[2], 3.900, "#aaa", "end");
  T(845, y, r[3], 3.900, r[3] === "+9,245" ? "#6fbf4a" : "#aaa", "end");
});
```
